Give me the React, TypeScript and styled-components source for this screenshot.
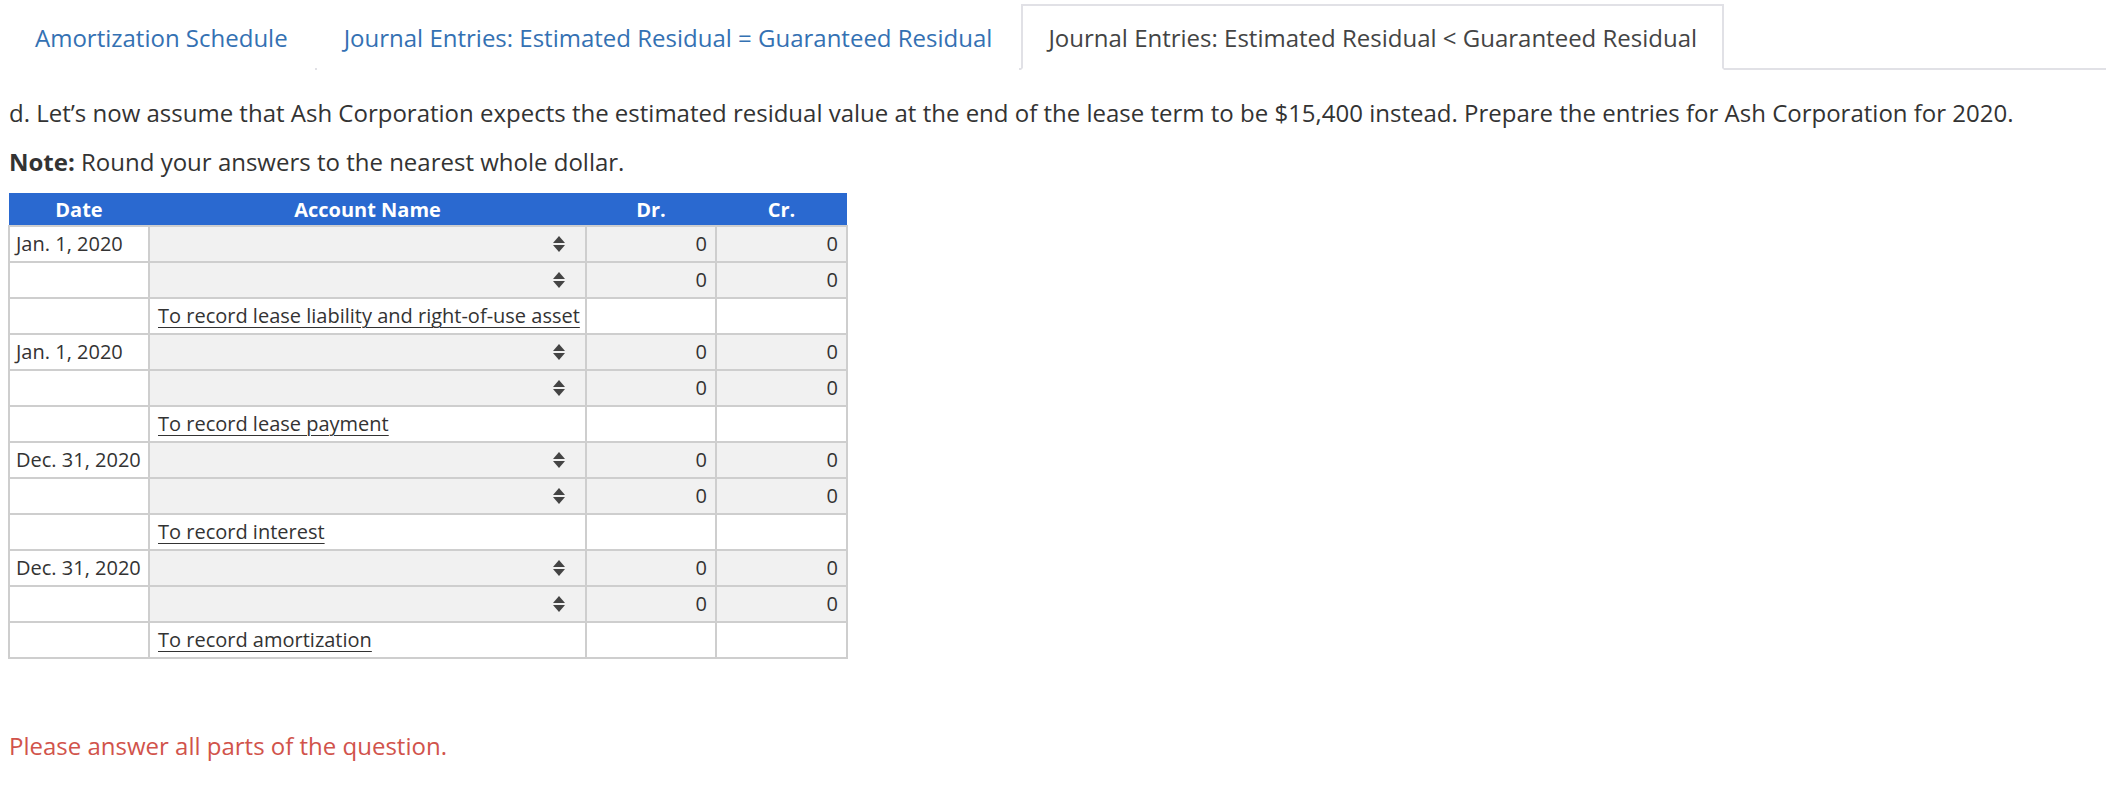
import React from "react";
import styled, { createGlobalStyle } from "styled-components";

const GlobalStyle = createGlobalStyle`
  body {
    margin: 0;
    background: #fff;
    font-family: "Open Sans", "Liberation Sans", sans-serif;
    color: #333;
  }
`;

const Page = styled.div`
  padding: 0 8px;
`;

const TabBar = styled.div`
  display: flex;
  gap: 2px;
  margin-top: 4px;
  border-bottom: 2px solid #e1e1e6;
`;

const Tab = styled.div<{ $active?: boolean }>`
  height: 62px;
  margin-bottom: -2px;
  padding: 0 25px;
  display: flex;
  align-items: center;
  font-size: 24px;
  background: #fff;
  color: ${(p) => (p.$active ? "#444" : "#3471b3")};
  border: 2px solid ${(p) => (p.$active ? "#e1e1e6" : "transparent")};
  border-bottom: 2px solid ${(p) => (p.$active ? "#fff" : "transparent")};
`;

const Para = styled.p<{ $gap: number }>`
  margin: 0 0 ${(p) => p.$gap}px;
  padding-left: 1px;
  font-size: 24px;
  line-height: 32px;
`;

const Question = styled(Para)`
  margin-top: 27px;
`;

const Table = styled.table`
  border-collapse: collapse;
  font-size: 20px;
  table-layout: fixed;
  width: 838px;
`;

const Th = styled.th<{ $w: number }>`
  width: ${(p) => p.$w}px;
  height: 32px;
  padding: 0;
  background: #2a69d0;
  color: #fff;
  font-weight: 700;
  font-size: 20px;
  text-align: center;
`;

const Td = styled.td<{ $fill?: boolean; $align?: string }>`
  height: 34px;
  padding: 0 8px 0 6px;
  border: 2px solid #cecece;
  background: ${(p) => (p.$fill ? "#f1f1f1" : "#fff")};
  text-align: ${(p) => p.$align || "left"};
  white-space: nowrap;
  line-height: 34px;
`;

const SelectCell = styled.div`
  display: flex;
  justify-content: flex-end;
  align-items: center;
  padding-right: 12px;
  height: 34px;
`;

const Memo = styled.span`
  padding-left: 2px;
  text-decoration: underline;
  text-underline-offset: 4px;
  text-decoration-thickness: 1px;
`;

const Warning = styled.p`
  margin: 71px 0 0;
  padding-left: 1px;
  font-size: 24px;
  line-height: 32px;
  color: #d1534b;
`;

const Spinner = () => (
  <svg width="12" height="16" viewBox="0 0 12 16">
    <path d="M6 0 L12 7 L0 7 Z" fill="#444" />
    <path d="M0 9 L12 9 L6 16 Z" fill="#444" />
  </svg>
);

const entries = [
  { date: "Jan. 1, 2020", memo: "To record lease liability and right-of-use asset" },
  { date: "Jan. 1, 2020", memo: "To record lease payment" },
  { date: "Dec. 31, 2020", memo: "To record interest" },
  { date: "Dec. 31, 2020", memo: "To record amortization" },
];

const App = () => {
  return (
    <Page>
      <GlobalStyle />
      <TabBar>
        <Tab>Amortization Schedule</Tab>
        <Tab>Journal Entries: Estimated Residual = Guaranteed Residual</Tab>
        <Tab $active>Journal Entries: Estimated Residual &lt; Guaranteed Residual</Tab>
      </TabBar>
      <Question $gap={17}>
        d. Let’s now assume that Ash Corporation expects the estimated residual value at the end of the
        lease term to be $15,400 instead. Prepare the entries for Ash Corporation for 2020.
      </Question>
      <Para $gap={15}>
        <strong>Note:</strong> Round your answers to the nearest whole dollar.
      </Para>
      <Table>
        <thead>
          <tr>
            <Th $w={140}>Date</Th>
            <Th $w={437}>Account Name</Th>
            <Th $w={130}>Dr.</Th>
            <Th $w={131}>Cr.</Th>
          </tr>
        </thead>
        <tbody>
          {entries.map((e, i) => (
            <React.Fragment key={i}>
              {[0, 1].map((line) => (
                <tr key={line}>
                  <Td>{line === 0 ? e.date : ""}</Td>
                  <Td $fill>
                    <SelectCell>
                      <Spinner />
                    </SelectCell>
                  </Td>
                  <Td $fill $align="right">0</Td>
                  <Td $fill $align="right">0</Td>
                </tr>
              ))}
              <tr>
                <Td />
                <Td>
                  <Memo>{e.memo}</Memo>
                </Td>
                <Td />
                <Td />
              </tr>
            </React.Fragment>
          ))}
        </tbody>
      </Table>
      <Warning>Please answer all parts of the question.</Warning>
    </Page>
  );
};

export default App;
